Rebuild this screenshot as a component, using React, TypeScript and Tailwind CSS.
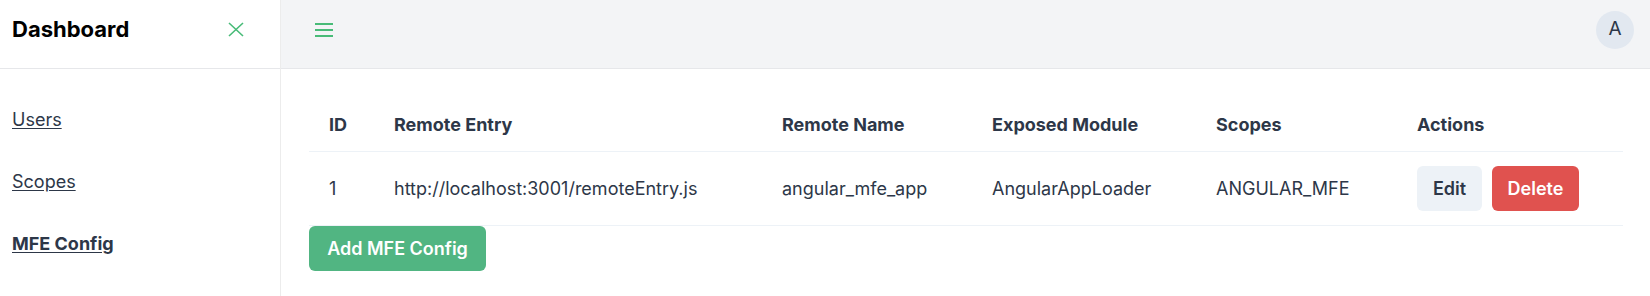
const rows = [
  {
    id: 1,
    remoteEntry: "http://localhost:3001/remoteEntry.js",
    remoteName: "angular_mfe_app",
    exposedModule: "AngularAppLoader",
    scopes: "ANGULAR_MFE",
  },
];

const App = () => {
  return (
    <div className="flex h-[296px] w-[1650px] bg-white text-[#2D3748] font-['Inter','Liberation_Sans',sans-serif] overflow-hidden">
      {/* Sidebar */}
      <aside className="w-[281px] shrink-0 flex flex-col border-r border-[#ECECEC]">
        <div className="h-[69px] pb-[9px] px-[12px] flex items-center justify-between border-b border-[#E6E7EA]">
          <h1 className="text-[22px] font-bold text-black">Dashboard</h1>
          <button className="mr-[24px] text-[#48BB78]">
            <svg width="16" height="15" viewBox="0 0 16 15" fill="none" stroke="currentColor" strokeWidth="1.6">
              <path d="M1 1 L15 14 M15 1 L1 14" />
            </svg>
          </button>
        </div>
        <nav className="flex flex-col px-[12px] pt-[40px] gap-[40px] text-[18px] leading-[22px]">
          <a className="underline underline-offset-2">Users</a>
          <a className="underline underline-offset-2">Scopes</a>
          <a className="underline underline-offset-2 font-bold">MFE Config</a>
        </nav>
      </aside>

      {/* Main */}
      <div className="flex-1 flex flex-col">
        <header className="h-[69px] pb-[9px] bg-[#F3F4F6] border-b border-[#E6E7EA] flex items-center justify-between pl-[33px] pr-[17px]">
          <button className="text-[#48BB78]">
            <svg width="20" height="16" viewBox="0 0 20 16" fill="none" stroke="currentColor" strokeWidth="1.8">
              <path d="M1 2 H19 M1 8 H19 M1 14 H19" />
            </svg>
          </button>
          <div className="w-[38px] h-[38px] rounded-full bg-[#E2E8F0] flex items-center justify-center text-[19px]">
            A
          </div>
        </header>

        <main className="px-[28px] pt-[30px]">
          <table className="w-[1314px] table-fixed text-left text-[18px]">
            <thead>
              <tr className="h-[52px] border-b border-[#EDF2F7] font-bold">
                <th className="w-[65px] pl-[20px]">ID</th>
                <th className="w-[388px] pl-[20px]">Remote Entry</th>
                <th className="w-[210px] pl-[20px]">Remote Name</th>
                <th className="w-[224px] pl-[20px]">Exposed Module</th>
                <th className="w-[201px] pl-[20px]">Scopes</th>
                <th className="pl-[20px]">Actions</th>
              </tr>
            </thead>
            <tbody>
              {rows.map((row) => (
                <tr key={row.id} className="h-[74px] border-b border-[#EDF2F7]">
                  <td className="pl-[20px]">{row.id}</td>
                  <td className="pl-[20px]">{row.remoteEntry}</td>
                  <td className="pl-[20px]">{row.remoteName}</td>
                  <td className="pl-[20px]">{row.exposedModule}</td>
                  <td className="pl-[20px]">{row.scopes}</td>
                  <td className="pl-[20px]">
                    <div className="flex gap-[10px]">
                      <button className="w-[65px] h-[45px] rounded-[6px] bg-[#EDF2F7] font-semibold">Edit</button>
                      <button className="w-[87px] h-[45px] rounded-[6px] bg-[#E0524F] text-white font-semibold">
                        Delete
                      </button>
                    </div>
                  </td>
                </tr>
              ))}
            </tbody>
          </table>
          <button className="w-[177px] h-[45px] rounded-[6px] bg-[#51B582] text-white font-semibold text-[18px]">
            Add MFE Config
          </button>
        </main>
      </div>
    </div>
  );
};

export default App;
